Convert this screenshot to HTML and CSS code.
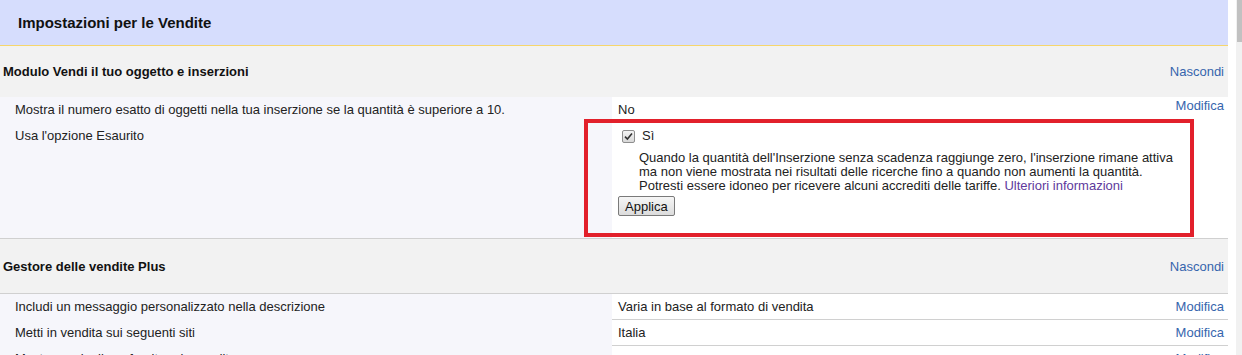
FILE: index.html
```html
<!DOCTYPE html>
<html lang="it">
<head>
  <meta charset="UTF-8" />
  <meta name="viewport" content="width=device-width, initial-scale=1.0" />
  <title>Impostazioni per le Vendite</title>
  <link rel="stylesheet" href="styles.css">
</head>
<body>
  <div class="window">
    <div class="page">
      <div class="title">Impostazioni per le Vendite</div>

      <div class="section first">
        <div class="sec-head">
          <span>Modulo Vendi il tuo oggetto e inserzioni</span>
          <a href="#">Nascondi</a>
        </div>
        <div class="group">
          <div class="label">Mostra il numero esatto di oggetti nella tua inserzione se la quantità è superiore a 10.</div>
          <div class="value">No</div>
          <a class="edit" href="#">Modifica</a>
          <div class="label last">Usa l'opzione Esaurito</div>
          <div class="value last">
            <label class="check"><span class="box"><svg viewBox="0 0 9 9" width="9" height="9"><path d="M1 4.6 L3.4 7 L8 1.6" fill="none" stroke="#333" stroke-width="1.6"/></svg></span>Sì</label>
            <p class="note">Quando la quantità dell'Inserzione senza scadenza raggiunge zero, l'inserzione rimane attiva ma non viene mostrata nei risultati delle ricerche fino a quando non aumenti la quantità. Potresti essere idoneo per ricevere alcuni accrediti delle tariffe. <a href="#">Ulteriori informazioni</a></p>
            <button>Applica</button>
          </div>
        </div>
        <div class="highlight"></div>
      </div>

      <div class="section">
        <div class="sec-head">
          <span>Gestore delle vendite Plus</span>
          <a href="#">Nascondi</a>
        </div>
        <div class="row">
          <div class="label">Includi un messaggio personalizzato nella descrizione</div>
          <div class="value">Varia in base al formato di vendita</div>
          <a class="edit" href="#">Modifica</a>
        </div>
        <div class="row">
          <div class="label">Metti in vendita sui seguenti siti</div>
          <div class="value">Italia</div>
          <a class="edit" href="#">Modifica</a>
        </div>
        <div class="row">
          <div class="label">Mostra un riepilogo fornitore in vendita</div>
          <div class="value"></div>
          <a class="edit" href="#">Modifica</a>
        </div>
      </div>
    </div>

    <div class="scrollbar"><div class="thumb"></div></div>
  </div>
</body>
</html>
```

FILE: styles.css
```css
* {
  margin: 0;
  padding: 0;
  box-sizing: border-box;
}
body {
  font-family: 'Liberation Sans', Arial, sans-serif;
  font-size: 13px;
  color: #222;
  background: #fff;
  overflow: hidden;
}
a {
  color: #3665ad;
  text-decoration: none;
}
.window {
  display: flex;
  gap: 8px;
  height: 355px;
}
.page {
  width: 1228px;
  flex-shrink: 0;
}
.title {
  height: 46px;
  background: #d6ddfd;
  border-bottom: 1px solid #f6d66c;
  padding: 14px 18px;
  font-size: 15px;
  font-weight: bold;
  color: #111;
}
.section {
  position: relative;
}
.sec-head {
  display: flex;
  justify-content: space-between;
  align-items: center;
  height: 55px;
  background: #f2f2f2;
  padding: 0 4px 0 3px;
  border-bottom: 1px solid #d0d0d0;
  font-weight: bold;
  color: #111;
}
.sec-head a {
  font-weight: normal;
}
.first .sec-head {
  height: 51px;
  border-bottom: none;
}
.group, .row {
  display: grid;
  grid-template-columns: 612px minmax(0, 1fr) auto;
}
.group {
  border-bottom: 1px solid #d0d0d0;
}
.row {
  border-bottom: 1px solid #d0d0d0;
  height: 26px;
}
.label {
  background: #f6f6fb;
  padding: 0 15px;
  line-height: 26px;
}
.value {
  padding: 0 6px;
  line-height: 26px;
}
.edit {
  padding: 0 4px 0 0;
  line-height: 26px;
}
.group .edit {
  grid-row: 1 / span 2;
  grid-column: 3;
  line-height: 18px;
}
.group .last {
  padding-bottom: 22px;
}
.check {
  display: flex;
  align-items: center;
  line-height: 26px;
}
.box {
  width: 13px;
  height: 13px;
  margin: 0 7px 0 4px;
  border: 1px solid #8e8e8e;
  border-radius: 2px;
  background: linear-gradient(#f4f4f4, #d8d8d8);
  display: flex;
  align-items: center;
  justify-content: center;
}
.note {
  padding-left: 21px;
  line-height: 14px;
  margin-top: 2px;
  margin-bottom: 3px;
  width: 560px;
}
.note a {
  color: #5e3a9c;
}
button {
  display: block;
  font-family: inherit;
  font-size: 13px;
  height: 20px;
  padding: 0 6px;
  color: #111;
  border: 1px solid #7a7a7a;
  border-radius: 2px;
  background: linear-gradient(#f6f6f6, #dcdcdc);
}
.highlight {
  position: absolute;
  left: 584px;
  top: 73px;
  width: 610px;
  height: 118px;
  border: 4px solid #e2202b;
  pointer-events: none;
}
.scrollbar {
  width: 6px;
  background: #f1f1f1;
  padding-left: 1px;
}
.thumb {
  height: 42px;
  background: #c1c1c1;
}
```
